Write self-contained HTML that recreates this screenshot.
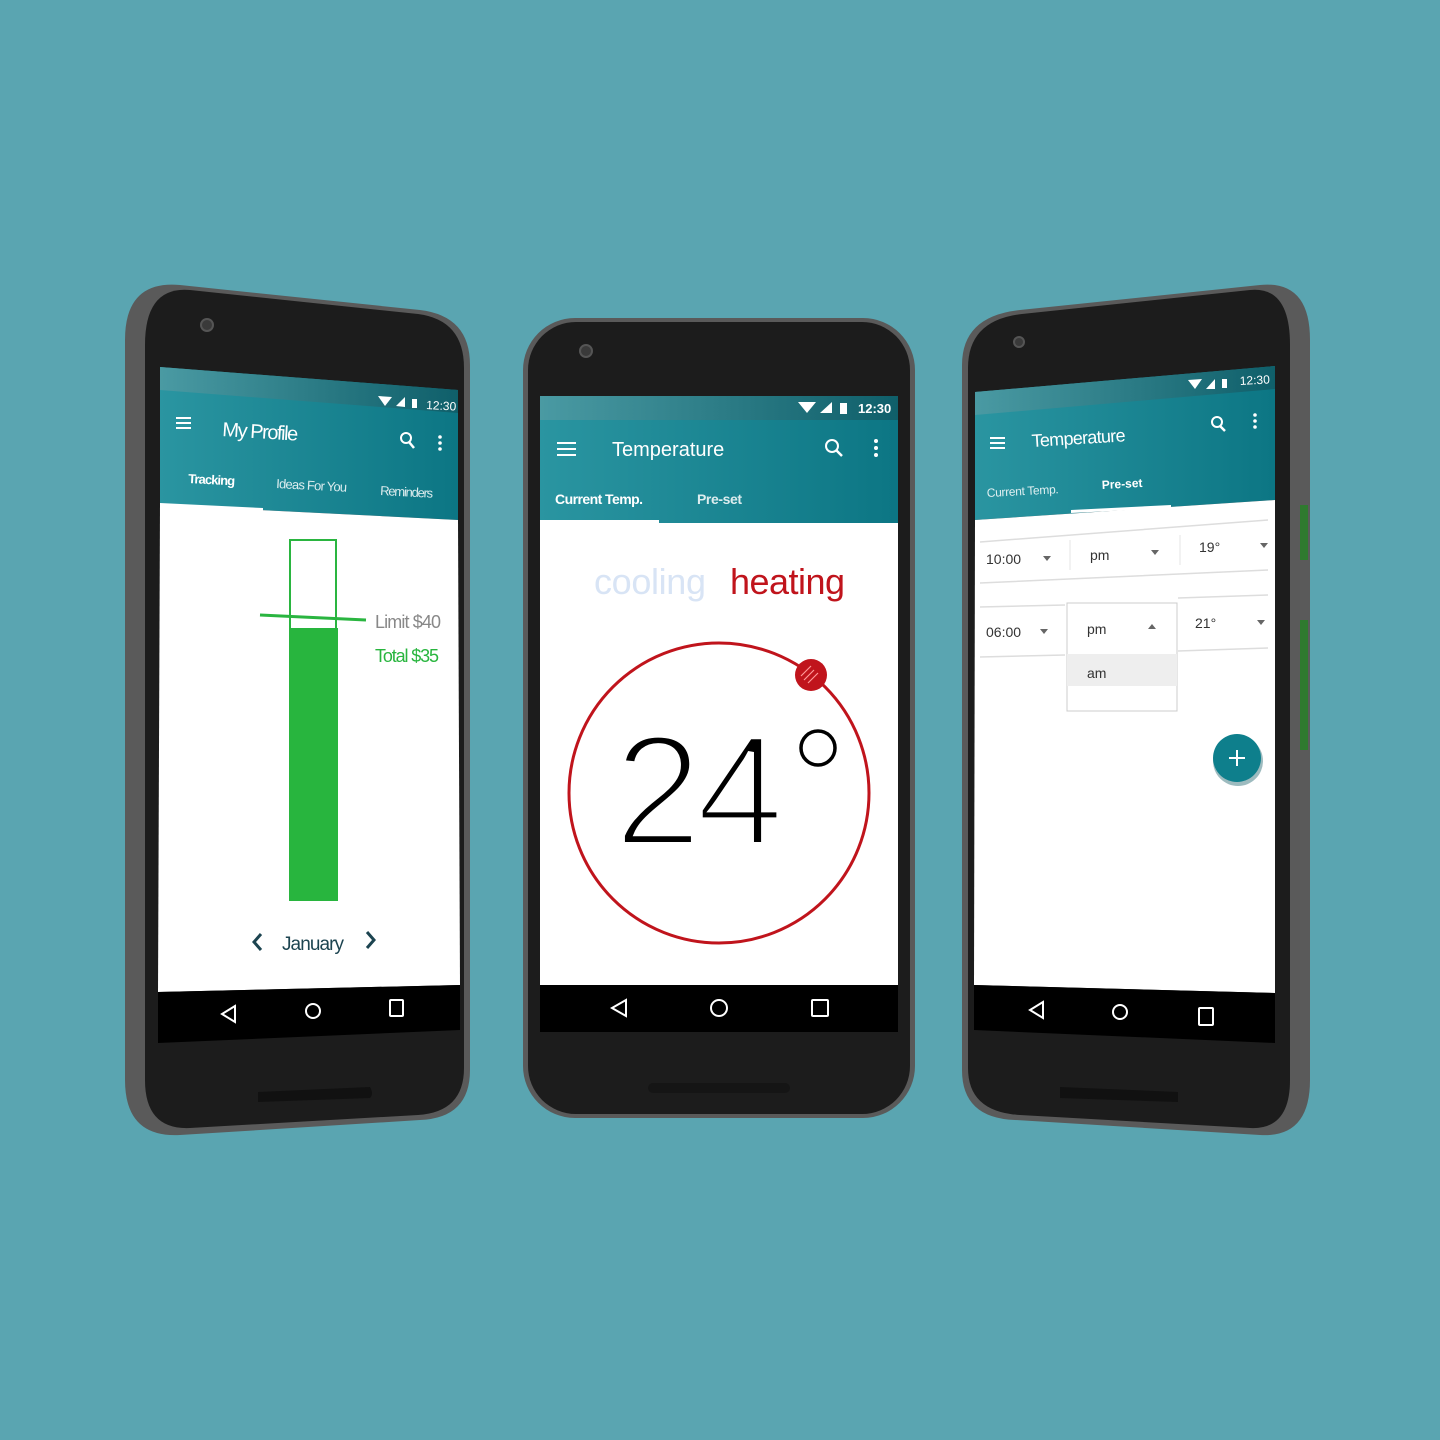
<!DOCTYPE html>
<html><head><meta charset="utf-8"><style>
html,body{margin:0;padding:0;background:#5aa5b1;}
svg{display:block;font-family:"Liberation Sans",sans-serif;}
</style></head><body>
<svg width="1440" height="1440" viewBox="0 0 1440 1440" xmlns="http://www.w3.org/2000/svg">
<defs>
<linearGradient id="bar" x1="0" y1="0" x2="1" y2="0"><stop offset="0" stop-color="#2a95a1"/><stop offset="1" stop-color="#0c7684"/></linearGradient>
<linearGradient id="st" x1="0" y1="0" x2="1" y2="0"><stop offset="0" stop-color="#4a9aa3"/><stop offset="1" stop-color="#0f5f6a"/></linearGradient>
</defs>
<rect width="1440" height="1440" fill="#5aa5b1"/>

<!-- LEFT PHONE -->
<path d="M180,285 L420,310 Q470,316 470,365 L470,1070 Q470,1118 420,1120 L180,1135 Q125,1138 125,1080 L125,340 Q125,280 180,285 Z" fill="#5a5a5a"/>
<path d="M190,290 L418,314 Q464,320 464,368 L464,1068 Q464,1112 418,1115 L190,1128 Q145,1130 145,1080 L145,345 Q145,286 190,290 Z" fill="#1c1c1c"/>
<circle cx="207" cy="325" r="6" fill="#3a3a3a" stroke="#555" stroke-width="2"/>
<path d="M258,1092 L370,1087 Q374,1094 370,1098 L258,1102 Z" fill="#111"/>
<polygon points="160,367 458,390 458,520 160,505" fill="url(#bar)"/>
<polygon points="160,367 458,390 458,413 160,390" fill="url(#st)"/>
<polygon points="160,505 458,520 460,985 158,992" fill="#fff"/>
<polygon points="158,992 460,985 460,1030 158,1043" fill="#000"/>
<polygon points="160,503 263,508 263,511 160,506" fill="#fff"/>
<g fill="#fff">
<text x="426" y="409" font-size="12" transform="rotate(3 426 409)">12:30</text>
<path d="M378,396 l14,1 l-7,9 z M396,406 l9,-9 v10 z"/><rect x="412" y="399" width="5" height="9"/>
<rect x="176" y="417" width="15" height="2"/><rect x="176" y="422" width="15" height="2"/><rect x="176" y="427" width="15" height="2"/>
<text x="222" y="436" font-size="20" transform="rotate(3.5 222 436)" textLength="76">My Profile</text>
<circle cx="406" cy="438" r="5" fill="none" stroke="#fff" stroke-width="2"/><path d="M409,442 l5,6" stroke="#fff" stroke-width="2.5"/>
<circle cx="440" cy="437" r="1.8"/><circle cx="440" cy="443" r="1.8"/><circle cx="440" cy="449" r="1.8"/>
<text x="188" y="483" font-size="13" font-weight="bold" transform="rotate(3 188 483)" textLength="47">Tracking</text>
<text x="276" y="488" font-size="13" opacity=".85" transform="rotate(3 276 488)" textLength="71">Ideas For You</text>
<text x="380" y="495" font-size="13" opacity=".85" transform="rotate(3 380 495)" textLength="53">Reminders</text>
</g>
<rect x="290" y="540" width="46" height="360" fill="none" stroke="#2ab540" stroke-width="2"/>
<rect x="290" y="628" width="48" height="273" fill="#28b53e"/>
<path d="M260,615 L366,620" stroke="#2ab540" stroke-width="3"/>
<text x="375" y="628" font-size="18" fill="#888" textLength="66">Limit $40</text>
<text x="375" y="662" font-size="18" fill="#28b53e" textLength="64">Total $35</text>
<text x="282" y="950" font-size="19" fill="#1c4450" textLength="62">January</text>
<path d="M261,934 l-7,8 l7,8 M367,932 l7,8 l-7,8" fill="none" stroke="#1c4450" stroke-width="3"/>
<g fill="none" stroke="#fff" stroke-width="2"><path d="M235,1006 l-13,8 l13,8 z"/><circle cx="313" cy="1011" r="7"/><rect x="390" y="1000" width="13" height="16" rx="1"/></g>

<!-- MIDDLE PHONE -->
<rect x="523" y="318" width="392" height="800" rx="52" fill="#5a5a5a"/>
<rect x="528" y="322" width="382" height="792" rx="48" fill="#1c1c1c"/>
<circle cx="586" cy="351" r="6" fill="#3a3a3a" stroke="#555" stroke-width="2"/>
<rect x="648" y="1083" width="142" height="10" rx="5" fill="#151515"/>
<rect x="540" y="396" width="358" height="127" fill="url(#bar)"/>
<rect x="540" y="396" width="358" height="24" fill="url(#st)"/>
<rect x="540" y="523" width="358" height="462" fill="#fff"/>
<rect x="540" y="520" width="119" height="3" fill="#fff"/>
<rect x="540" y="985" width="358" height="47" fill="#000"/>
<g fill="#fff">
<text x="858" y="413" font-size="13" font-weight="bold">12:30</text>
<path d="M798,402 l18,0 l-9,11 z M820,413 l12,-11 v11 z"/><rect x="840" y="403" width="7" height="11"/>
<rect x="557" y="442" width="19" height="2"/><rect x="557" y="448" width="19" height="2"/><rect x="557" y="454" width="19" height="2"/>
<text x="612" y="456" font-size="20">Temperature</text>
<circle cx="832" cy="446" r="6" fill="none" stroke="#fff" stroke-width="2"/><path d="M836,450 l6,6" stroke="#fff" stroke-width="2.5"/>
<circle cx="876" cy="441" r="2"/><circle cx="876" cy="448" r="2"/><circle cx="876" cy="455" r="2"/>
<text x="555" y="504" font-size="14" font-weight="bold" textLength="88">Current Temp.</text>
<text x="697" y="504" font-size="14" font-weight="bold" opacity=".85" textLength="45">Pre-set</text>
</g>
<text x="594" y="594" font-size="36" fill="#d8e4f5" textLength="112">cooling</text>
<text x="730" y="594" font-size="36" fill="#c0141c" textLength="115">heating</text>
<circle cx="719" cy="793" r="150" fill="none" stroke="#c0141c" stroke-width="3"/>
<circle cx="811" cy="675" r="16" fill="#c0141c"/>
<path d="M804,680 l10,-10 M808,683 l10,-10 M801,676 l10,-10" stroke="#f99" stroke-width="1.2"/>
<text x="614" y="845" font-size="158" fill="#000" stroke="#fff" stroke-width="6" textLength="170">24</text>
<circle cx="818" cy="748" r="17" fill="none" stroke="#000" stroke-width="3.5"/>
<g fill="none" stroke="#fff" stroke-width="2"><path d="M626,1000 l-14,8 l14,8 z"/><circle cx="719" cy="1008" r="8"/><rect x="812" y="1000" width="16" height="16" rx="1"/></g>

<!-- RIGHT PHONE -->
<path d="M1020,310 L1260,285 Q1310,280 1310,340 L1310,1080 Q1310,1138 1260,1135 L1015,1120 Q962,1118 962,1070 L962,365 Q962,316 1020,310 Z" fill="#5a5a5a"/>
<path d="M1022,314 L1250,290 Q1290,286 1290,345 L1290,1080 Q1290,1130 1250,1128 L1020,1115 Q968,1112 968,1068 L968,368 Q968,320 1022,314 Z" fill="#1c1c1c"/>
<rect x="1300" y="505" width="8" height="55" fill="#2f7a2f"/><rect x="1300" y="620" width="8" height="130" fill="#2f7a2f"/>
<circle cx="1019" cy="342" r="5" fill="#3a3a3a" stroke="#555" stroke-width="2"/>
<path d="M1060,1087 L1178,1092 L1178,1102 L1060,1098 Z" fill="#111"/>
<polygon points="975,392 1275,366 1275,500 975,520" fill="url(#bar)"/>
<polygon points="975,392 1275,366 1275,389 975,415" fill="url(#st)"/>
<polygon points="975,520 1275,500 1275,993 974,985" fill="#fff"/>
<polygon points="974,985 1275,993 1275,1043 974,1030" fill="#000"/>
<polygon points="1071,510 1171,505 1171,508 1071,513" fill="#fff"/>
<g fill="#fff">
<text x="1240" y="385" font-size="12" transform="rotate(-3 1240 385)">12:30</text>
<path d="M1188,380 l14,-1 l-7,10 z M1206,389 l9,-10 v10 z"/><rect x="1222" y="379" width="5" height="9"/>
<rect x="990" y="437" width="15" height="2"/><rect x="990" y="442" width="15" height="2"/><rect x="990" y="447" width="15" height="2"/>
<text x="1032" y="447" font-size="18" transform="rotate(-3.5 1032 447)" textLength="94">Temperature</text>
<circle cx="1217" cy="422" r="5" fill="none" stroke="#fff" stroke-width="2"/><path d="M1220,426 l5,5" stroke="#fff" stroke-width="2.5"/>
<circle cx="1255" cy="415" r="1.8"/><circle cx="1255" cy="421" r="1.8"/><circle cx="1255" cy="427" r="1.8"/>
<text x="987" y="497" font-size="12" opacity=".85" transform="rotate(-3 987 497)" textLength="72">Current Temp.</text>
<text x="1102" y="489" font-size="12" font-weight="bold" transform="rotate(-3 1102 489)">Pre-set</text>
</g>
<g font-size="14" fill="#333">
<path d="M980,542 L1268,520 M980,583 L1268,570 M980,607 L1065,605 M1178,598 L1268,595 M980,657 L1065,655 M1178,651 L1268,648" stroke="#ddd" stroke-width="1.5"/>
<path d="M1070,540 v30 M1180,535 v30" stroke="#e5e5e5"/>
<text x="986" y="564">10:00</text><path d="M1043,556 l8,0 l-4,5 z" fill="#666"/>
<text x="1090" y="560">pm</text><path d="M1151,550 l8,0 l-4,5 z" fill="#666"/>
<text x="1199" y="552">19°</text><path d="M1260,543 l8,0 l-4,5 z" fill="#666"/>
<text x="986" y="637">06:00</text><path d="M1040,629 l8,0 l-4,5 z" fill="#666"/>
<text x="1195" y="628">21°</text><path d="M1257,620 l8,0 l-4,5 z" fill="#666"/>
<rect x="1067" y="603" width="110" height="108" fill="#fff" stroke="#ccc"/>
<rect x="1067" y="654" width="110" height="32" fill="#eee"/>
<text x="1087" y="634">pm</text><path d="M1148,629 l8,0 l-4,-5 z" fill="#666"/>
<text x="1087" y="678">am</text>
</g>
<circle cx="1238" cy="761" r="25" fill="#0a5560" opacity=".4"/>
<circle cx="1237" cy="758" r="24" fill="#0e7f8c"/>
<path d="M1237,750 v16 M1229,758 h16" stroke="#fff" stroke-width="2"/>
<g fill="none" stroke="#fff" stroke-width="2"><path d="M1043,1002 l-13,8 l13,8 z"/><circle cx="1120" cy="1012" r="7"/><rect x="1199" y="1008" width="14" height="17" rx="1"/></g>
</svg>
</body></html>
